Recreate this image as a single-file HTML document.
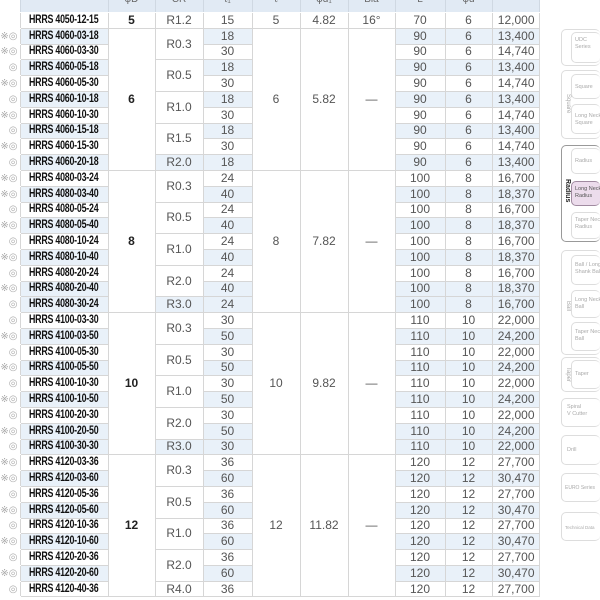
<!DOCTYPE html>
<html><head><meta charset="utf-8"><style>
*{margin:0;padding:0;box-sizing:border-box}
body{width:600px;height:600px;overflow:hidden;background:#fff;font-family:"Liberation Sans","DejaVu Sans",sans-serif;position:relative}
table{position:absolute;left:0;top:-3px;border-collapse:collapse;table-layout:fixed;width:539px}
td{border:1px solid #d6d6d6;height:15.8px;font-size:12px;color:#555;text-align:center;padding:0;line-height:13px;background:#fff;white-space:nowrap;overflow:hidden}
td.m{border:none;border-bottom:1px solid #fff;font-size:10px;color:#aaa;text-align:right;padding-right:2px}
td.n{font-weight:bold;color:#111;font-size:11.5px;text-align:left;padding-left:8px;letter-spacing:-0.3px}
td.n span{display:inline-block;transform:scaleX(0.77);transform-origin:left center}
td.p{text-align:right;padding-right:4px}
td.b{font-weight:bold;color:#222}
tr.s td{background:#e9f1f9}
tr.s td.r,tr.s td.m{background:#fff}
tr.h td{background:#e1eaf4;height:15px;font-size:10px;color:#666;vertical-align:top;line-height:4px;border-color:#fff #cfd8e2 #fff #cfd8e2}
tr.h td.m{background:#fff}
.sb{position:absolute;border:1px solid #ddd;border-radius:5px;border-right:none}
.ib{position:absolute;left:9px;right:0;border:1px solid #ddd;border-radius:5px;border-right:none;font-size:5.5px;color:#aaa;padding:4px 3px;line-height:7px;white-space:nowrap;overflow:hidden}
.vl{position:absolute;left:0;width:9px;font-size:6px;color:#aaa;writing-mode:vertical-rl;text-align:center}
</style></head><body>
<table>
<colgroup><col style="width:20px"><col style="width:88px"><col style="width:47px"><col style="width:48px"><col style="width:49px"><col style="width:48px"><col style="width:48px"><col style="width:47px"><col style="width:50px"><col style="width:47px"><col style="width:47px"></colgroup>
<tr class="h"><td class="m"></td><td></td><td>φD</td><td>CR</td><td>ℓ₁</td><td>ℓ</td><td>φd₁</td><td>Bia</td><td>L</td><td>φd</td><td></td></tr>
<tr><td class="m"></td><td class="n"><span>HRRS 4050-12-15</span></td><td class="b">5</td><td>R1.2</td><td>15</td><td>5</td><td>4.82</td><td>16°</td><td>70</td><td>6</td><td class="p">12,000</td></tr>

<tr class="s"><td class="m">※◎</td><td class="n"><span>HRRS 4060-03-18</span></td><td class="r b" rowspan="9">6</td><td class="r" rowspan="2">R0.3</td><td>18</td><td class="r" rowspan="9">6</td><td class="r" rowspan="9">5.82</td><td class="r" rowspan="9">—</td><td>90</td><td>6</td><td class="p">13,400</td></tr>
<tr><td class="m">※◎</td><td class="n"><span>HRRS 4060-03-30</span></td><td>30</td><td>90</td><td>6</td><td class="p">14,740</td></tr>
<tr class="s"><td class="m">◎</td><td class="n"><span>HRRS 4060-05-18</span></td><td class="r" rowspan="2">R0.5</td><td>18</td><td>90</td><td>6</td><td class="p">13,400</td></tr>
<tr><td class="m">※◎</td><td class="n"><span>HRRS 4060-05-30</span></td><td>30</td><td>90</td><td>6</td><td class="p">14,740</td></tr>
<tr class="s"><td class="m">◎</td><td class="n"><span>HRRS 4060-10-18</span></td><td class="r" rowspan="2">R1.0</td><td>18</td><td>90</td><td>6</td><td class="p">13,400</td></tr>
<tr><td class="m">※◎</td><td class="n"><span>HRRS 4060-10-30</span></td><td>30</td><td>90</td><td>6</td><td class="p">14,740</td></tr>
<tr class="s"><td class="m">◎</td><td class="n"><span>HRRS 4060-15-18</span></td><td class="r" rowspan="2">R1.5</td><td>18</td><td>90</td><td>6</td><td class="p">13,400</td></tr>
<tr><td class="m">※◎</td><td class="n"><span>HRRS 4060-15-30</span></td><td>30</td><td>90</td><td>6</td><td class="p">14,740</td></tr>
<tr class="s"><td class="m">◎</td><td class="n"><span>HRRS 4060-20-18</span></td><td>R2.0</td><td>18</td><td>90</td><td>6</td><td class="p">13,400</td></tr>

<tr><td class="m">※◎</td><td class="n"><span>HRRS 4080-03-24</span></td><td class="r b" rowspan="9">8</td><td class="r" rowspan="2">R0.3</td><td>24</td><td class="r" rowspan="9">8</td><td class="r" rowspan="9">7.82</td><td class="r" rowspan="9">—</td><td>100</td><td>8</td><td class="p">16,700</td></tr>
<tr class="s"><td class="m">※◎</td><td class="n"><span>HRRS 4080-03-40</span></td><td>40</td><td>100</td><td>8</td><td class="p">18,370</td></tr>
<tr><td class="m">◎</td><td class="n"><span>HRRS 4080-05-24</span></td><td class="r" rowspan="2">R0.5</td><td>24</td><td>100</td><td>8</td><td class="p">16,700</td></tr>
<tr class="s"><td class="m">※◎</td><td class="n"><span>HRRS 4080-05-40</span></td><td>40</td><td>100</td><td>8</td><td class="p">18,370</td></tr>
<tr><td class="m">◎</td><td class="n"><span>HRRS 4080-10-24</span></td><td class="r" rowspan="2">R1.0</td><td>24</td><td>100</td><td>8</td><td class="p">16,700</td></tr>
<tr class="s"><td class="m">※◎</td><td class="n"><span>HRRS 4080-10-40</span></td><td>40</td><td>100</td><td>8</td><td class="p">18,370</td></tr>
<tr><td class="m">◎</td><td class="n"><span>HRRS 4080-20-24</span></td><td class="r" rowspan="2">R2.0</td><td>24</td><td>100</td><td>8</td><td class="p">16,700</td></tr>
<tr class="s"><td class="m">※◎</td><td class="n"><span>HRRS 4080-20-40</span></td><td>40</td><td>100</td><td>8</td><td class="p">18,370</td></tr>
<tr class="s"><td class="m">◎</td><td class="n"><span>HRRS 4080-30-24</span></td><td>R3.0</td><td>24</td><td>100</td><td>8</td><td class="p">16,700</td></tr>

<tr><td class="m">◎</td><td class="n"><span>HRRS 4100-03-30</span></td><td class="r b" rowspan="9">10</td><td class="r" rowspan="2">R0.3</td><td>30</td><td class="r" rowspan="9">10</td><td class="r" rowspan="9">9.82</td><td class="r" rowspan="9">—</td><td>110</td><td>10</td><td class="p">22,000</td></tr>
<tr class="s"><td class="m">※◎</td><td class="n"><span>HRRS 4100-03-50</span></td><td>50</td><td>110</td><td>10</td><td class="p">24,200</td></tr>
<tr><td class="m">◎</td><td class="n"><span>HRRS 4100-05-30</span></td><td class="r" rowspan="2">R0.5</td><td>30</td><td>110</td><td>10</td><td class="p">22,000</td></tr>
<tr class="s"><td class="m">※◎</td><td class="n"><span>HRRS 4100-05-50</span></td><td>50</td><td>110</td><td>10</td><td class="p">24,200</td></tr>
<tr><td class="m">◎</td><td class="n"><span>HRRS 4100-10-30</span></td><td class="r" rowspan="2">R1.0</td><td>30</td><td>110</td><td>10</td><td class="p">22,000</td></tr>
<tr class="s"><td class="m">※◎</td><td class="n"><span>HRRS 4100-10-50</span></td><td>50</td><td>110</td><td>10</td><td class="p">24,200</td></tr>
<tr><td class="m">◎</td><td class="n"><span>HRRS 4100-20-30</span></td><td class="r" rowspan="2">R2.0</td><td>30</td><td>110</td><td>10</td><td class="p">22,000</td></tr>
<tr class="s"><td class="m">※◎</td><td class="n"><span>HRRS 4100-20-50</span></td><td>50</td><td>110</td><td>10</td><td class="p">24,200</td></tr>
<tr class="s"><td class="m">◎</td><td class="n"><span>HRRS 4100-30-30</span></td><td>R3.0</td><td>30</td><td>110</td><td>10</td><td class="p">22,000</td></tr>

<tr><td class="m">※◎</td><td class="n"><span>HRRS 4120-03-36</span></td><td class="r b" rowspan="9">12</td><td class="r" rowspan="2">R0.3</td><td>36</td><td class="r" rowspan="9">12</td><td class="r" rowspan="9">11.82</td><td class="r" rowspan="9">—</td><td>120</td><td>12</td><td class="p">27,700</td></tr>
<tr class="s"><td class="m">※◎</td><td class="n"><span>HRRS 4120-03-60</span></td><td>60</td><td>120</td><td>12</td><td class="p">30,470</td></tr>
<tr><td class="m">◎</td><td class="n"><span>HRRS 4120-05-36</span></td><td class="r" rowspan="2">R0.5</td><td>36</td><td>120</td><td>12</td><td class="p">27,700</td></tr>
<tr class="s"><td class="m">※◎</td><td class="n"><span>HRRS 4120-05-60</span></td><td>60</td><td>120</td><td>12</td><td class="p">30,470</td></tr>
<tr><td class="m">◎</td><td class="n"><span>HRRS 4120-10-36</span></td><td class="r" rowspan="2">R1.0</td><td>36</td><td>120</td><td>12</td><td class="p">27,700</td></tr>
<tr class="s"><td class="m">※◎</td><td class="n"><span>HRRS 4120-10-60</span></td><td>60</td><td>120</td><td>12</td><td class="p">30,470</td></tr>
<tr><td class="m">◎</td><td class="n"><span>HRRS 4120-20-36</span></td><td class="r" rowspan="2">R2.0</td><td>36</td><td>120</td><td>12</td><td class="p">27,700</td></tr>
<tr class="s"><td class="m">※◎</td><td class="n"><span>HRRS 4120-20-60</span></td><td>60</td><td>120</td><td>12</td><td class="p">30,470</td></tr>
<tr><td class="m">◎</td><td class="n"><span>HRRS 4120-40-36</span></td><td>R4.0</td><td>36</td><td>120</td><td>12</td><td class="p">27,700</td></tr>
</table>

<div class="sb" style="left:561px;top:29px;width:39px;height:37px"><div class="ib" style="top:2px;height:31px">UDC<br>Series</div></div>
<div class="sb" style="left:561px;top:70px;width:39px;height:69px"><div class="vl" style="top:10px;height:45px">Square</div>
<div class="ib" style="top:3px;height:25px;padding-top:9px">Square</div><div class="ib" style="top:33px;height:30px;padding-top:8px">Long Neck<br>Square</div></div>
<div class="sb" style="left:561px;top:145px;width:39px;height:97px;border-color:#999"><div class="vl" style="top:20px;height:50px;color:#222;font-weight:bold;font-size:7px">Radius</div>
<div class="ib" style="top:2px;height:26px;padding-top:9px">Radius</div>
<div class="ib" style="top:35px;height:25px;background:#ecdcec;border-color:#a08aa0;color:#555">Long Neck<br>Radius</div>
<div class="ib" style="top:66px;height:27px">Taper Neck<br>Radius</div></div>
<div class="sb" style="left:561px;top:250px;width:39px;height:105px"><div class="vl" style="top:35px;height:40px">Ball</div>
<div class="ib" style="top:4px;height:30px;padding-top:6px">Ball / Long<br>Shank Ball</div>
<div class="ib" style="top:39px;height:28px;padding-top:6px">Long Neck<br>Ball</div>
<div class="ib" style="top:71px;height:29px;padding-top:6px">Taper Neck<br>Ball</div></div>
<div class="sb" style="left:561px;top:357px;width:39px;height:35px"><div class="vl" style="top:4px;height:26px">Taper</div>
<div class="ib" style="top:2px;height:29px;padding-top:10px">Taper</div></div>
<div class="sb" style="left:561px;top:398px;width:39px;height:29px;font-size:5.5px;color:#aaa;padding:5px 5px;line-height:7px;white-space:nowrap">Spiral<br>V Cutter</div>
<div class="sb" style="left:561px;top:435px;width:39px;height:30px;font-size:5.5px;color:#aaa;padding:11px 5px;line-height:7px">Drill</div>
<div class="sb" style="left:561px;top:473px;width:39px;height:29px;font-size:5px;color:#aaa;padding:11px 3px;line-height:7px;white-space:nowrap;overflow:hidden">EURO Series</div>
<div class="sb" style="left:561px;top:512px;width:39px;height:29px;font-size:4.5px;color:#aaa;padding:11px 3px;line-height:7px;white-space:nowrap;overflow:hidden">Technical Data</div>
</body></html>
